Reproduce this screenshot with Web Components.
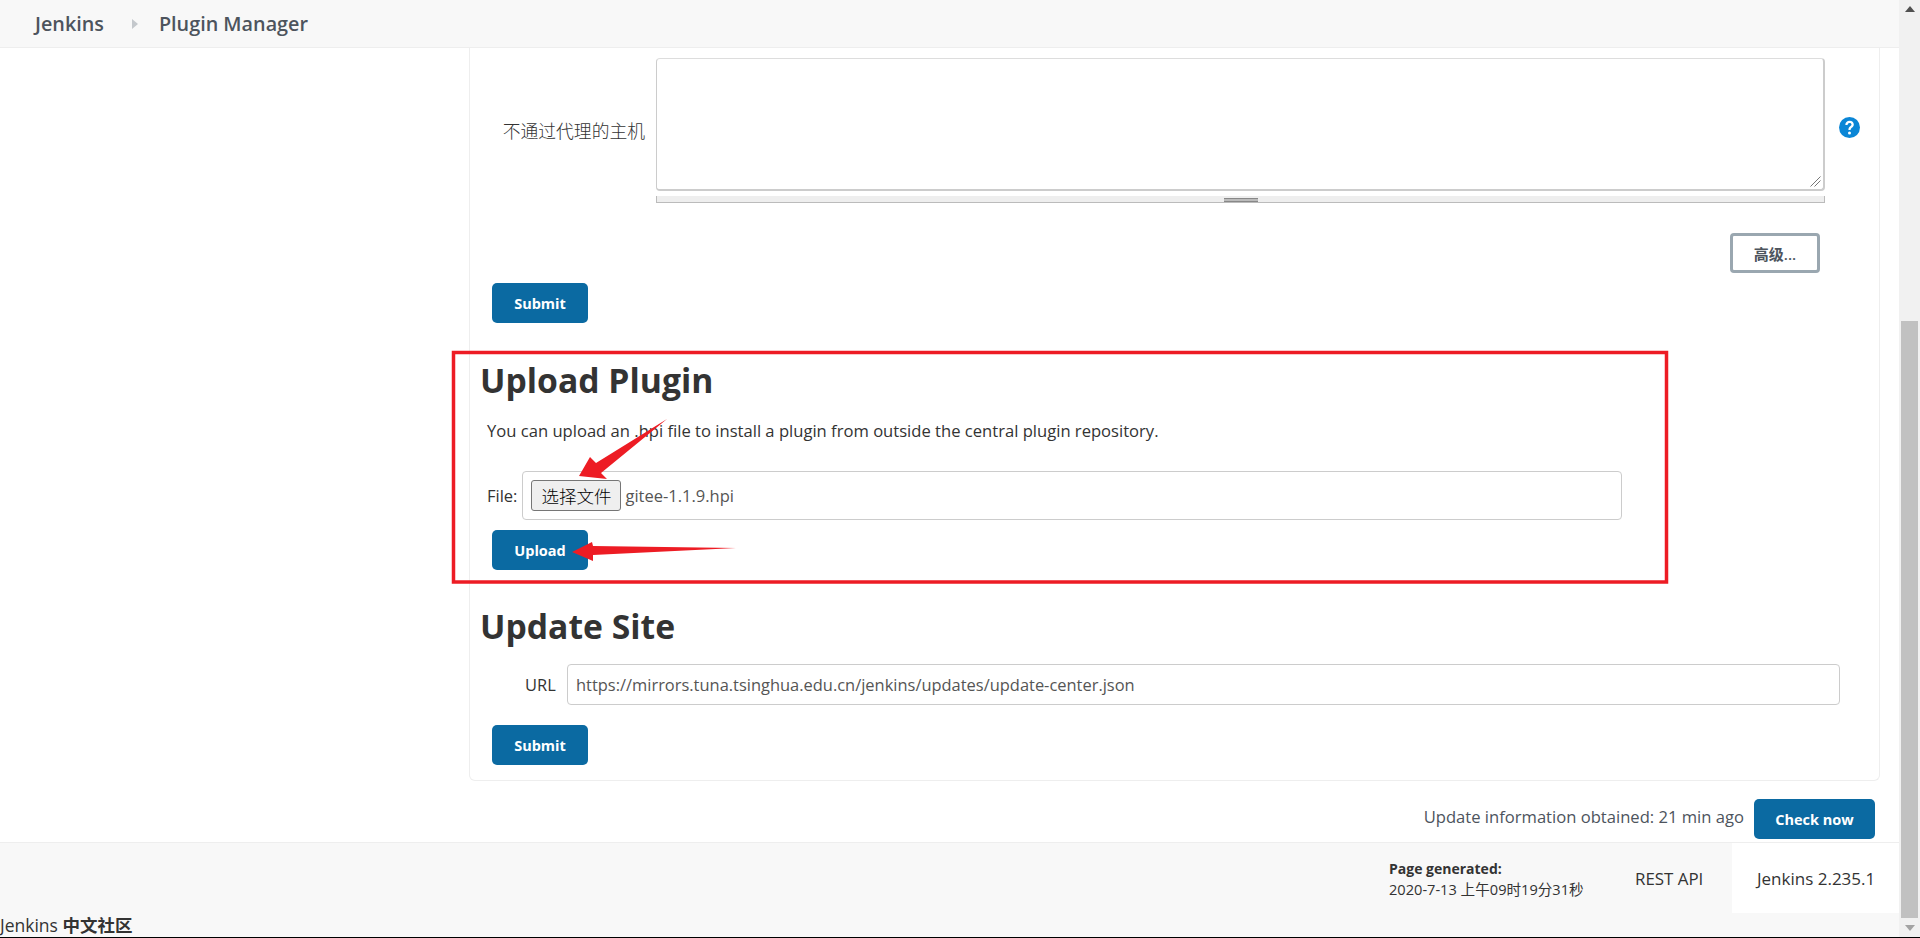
<!DOCTYPE html>
<html>
<head>
<meta charset="utf-8">
<title>Plugin Manager</title>
<style>
  html, body { margin: 0; height: 100%; overflow: hidden; background: #fff; }
  body {
    font-family: "Open Sans", "Noto Sans CJK SC", sans-serif;
    font-size: 16px;
    color: #333;
  }
</style>
</head>
<body>
<jk-shell>
  <jk-header>
    <a>Jenkins</a>
    <a>Plugin Manager</a>
  </jk-header>
  <jk-card>
    <jk-field label="不通过代理的主机" help></jk-field>
    <jk-advanced>高级...</jk-advanced>
    <jk-button class="first">Submit</jk-button>
    <jk-section heading="Upload Plugin" style="margin-top:36px">
      <p>You can upload an .hpi file to install a plugin from outside the central plugin repository.</p>
      <jk-file></jk-file>
      <jk-button>Upload</jk-button>
    </jk-section>
    <jk-section heading="Update Site" style="margin-top:35px">
      <jk-url value="https://mirrors.tuna.tsinghua.edu.cn/jenkins/updates/update-center.json"></jk-url>
      <jk-button>Submit</jk-button>
    </jk-section>
  </jk-card>
  <jk-status>
    <span>Update information obtained: 21 min ago</span>
    <jk-button wide>Check now</jk-button>
  </jk-status>
  <jk-footer></jk-footer>
  <jk-annotations></jk-annotations>
</jk-shell>

<script>
const FONT = `"Open Sans", "Noto Sans CJK SC", sans-serif`;

// JkShell.js;
customElements.define(
  "jk-shell",
  class JkShell extends HTMLElement {
    constructor() {
      super();
      this.attachShadow({ mode: "open" }).innerHTML = `
      <style>
        :host {
          display: flex;
          height: 938px;
          box-sizing: border-box;
          border-bottom: 1px solid #000;
          overflow: hidden;
        }
        .page {
          flex: 1;
          min-width: 0;
          position: relative;
          display: flex;
          flex-direction: column;
        }
      </style>
      <div class="page"><slot></slot></div>
      <jk-scrollbar></jk-scrollbar>
      `;
    }
  }
);

// JkScrollbar.js;
customElements.define(
  "jk-scrollbar",
  class JkScrollbar extends HTMLElement {
    constructor() {
      super();
      this.attachShadow({ mode: "open" }).innerHTML = `
      <style>
        :host {
          display: flex;
          flex-direction: column;
          align-items: center;
          width: 21px;
          background: #f1f1f1;
          box-sizing: border-box;
          padding: 0 2px;
        }
        .arrow { height: 17px; display: flex; align-items: center; justify-content: center; flex: none; }
        .arrow.down { height: 19px; }
        .track { flex: 1; width: 17px; padding-top: 304px; box-sizing: border-box; display: flex; }
        .thumb { flex: 1; background: #c1c1c1; }
      </style>
      <div class="arrow"><svg width="10" height="6" viewBox="0 0 10 6"><path d="M5 0l5 6H0z" fill="#505050"/></svg></div>
      <div class="track"><div class="thumb"></div></div>
      <div class="arrow down"><svg width="10" height="6" viewBox="0 0 10 6"><path d="M0 0h10L5 6z" fill="#a3a3a3"/></svg></div>
      `;
    }
  }
);

// JkHeader.js;
customElements.define(
  "jk-header",
  class JkHeader extends HTMLElement {
    constructor() {
      super();
      this.attachShadow({ mode: "open" }).innerHTML = `
      <style>
        :host {
          display: flex;
          align-items: center;
          flex: none;
          height: 48px;
          box-sizing: border-box;
          padding-left: 35px;
          background: #f8f8f8;
          border-bottom: 1px solid #eee;
          font: 600 19.800px ${FONT};
          color: #4d545d;
        }
        svg { margin: 0 21px 0 28px; }
      </style>
      <slot name="root"></slot>
      <svg width="6" height="10" viewBox="0 0 6 10"><path d="M0 0l6 5-6 5z" fill="#c4c8cc"/></svg>
      <slot name="page"></slot>
      `;
    }
    connectedCallback() {
      const links = this.querySelectorAll("a");
      links[0].slot = "root";
      links[1].slot = "page";
    }
  }
);

// JkCard.js;
customElements.define(
  "jk-card",
  class JkCard extends HTMLElement {
    constructor() {
      super();
      this.attachShadow({ mode: "open" }).innerHTML = `
      <style>
        :host {
          display: block;
          flex: none;
          height: 733px;
          box-sizing: border-box;
          margin: 0 19px 0 469px;
          padding: 10px 0 0 22px;
          border: 1px solid #eee;
          border-top: 0;
          border-radius: 0 0 6px 6px;
        }
      </style>
      <slot></slot>
      `;
    }
  }
);

// JkField.js;
customElements.define(
  "jk-field",
  class JkField extends HTMLElement {
    constructor() {
      super();
      this.attachShadow({ mode: "open" }).innerHTML = `
      <style>
        :host {
          display: flex;
          margin-left: -22px;
          color: #333;
        }
        label {
          width: 186px;
          box-sizing: border-box;
          padding: 10px 11px 0 0;
          height: 133px;
          display: flex;
          align-items: center;
          justify-content: flex-end;
          font-size: 17.800px;
          font-weight: 300;
          flex: none;
        }
        .box { width: 1169px; flex: none; }
        .area {
          height: 133px;
          box-sizing: border-box;
          border: 2px solid #ccc;
          border-width: 1px 2px 2px 1px;
          border-top-color: #ddd;
          border-left-color: #ccc;
          border-radius: 4px;
          position: relative;
        }
        .area svg { position: absolute; right: 2px; bottom: 2px; }
        .grip {
          height: 7px;
          margin-top: 5px;
          box-sizing: border-box;
          background: #eee;
          border: 1px solid #bbb;
          border-top: 0;
          display: flex;
          justify-content: center;
          padding-top: 2px;
        }
        .grip i {
          width: 34px;
          height: 4px;
          box-sizing: border-box;
          border-top: 1px solid #888;
          border-bottom: 1px solid #888;
          background: #bbb;
        }
        .help {
          margin: 59px 0 0 14px;
          width: 21px;
          height: 21px;
          flex: none;
        }
      </style>
      <label></label>
      <div class="box">
        <div class="area">
          <svg width="11" height="11" viewBox="0 0 11 11"><path d="M10.5 .5L.5 10.5M10.5 4.5l-6 6" stroke="#777" fill="none"/></svg>
        </div>
        <div class="grip"><i></i></div>
      </div>
      <svg class="help" viewBox="0 0 21 21">
        <circle cx="10.5" cy="10.5" r="10.5" fill="#0b86d6"/>
        <path d="M6.300 8c0-2.600 1.800-4.300 4.300-4.300s4.200 1.500 4.200 3.700c0 3-3.200 3.100-3.200 5.500h-2.200c0-3.500 3.100-3.700 3.100-5.300 0-.9-.7-1.600-1.900-1.600s-2 .8-2 2z" fill="#fff"/>
        <circle cx="10.500" cy="15.900" r="1.500" fill="#fff"/>
      </svg>
      `;
    }
    connectedCallback() {
      this.shadowRoot.querySelector("label").textContent = this.getAttribute("label");
    }
  }
);

// JkAdvanced.js;
customElements.define(
  "jk-advanced",
  class JkAdvanced extends HTMLElement {
    constructor() {
      super();
      this.attachShadow({ mode: "open" }).innerHTML = `
      <style>
        :host {
          display: flex;
          align-items: center;
          justify-content: center;
          width: 90px;
          height: 40px;
          box-sizing: border-box;
          margin: 30px 0 10px 1238px;
          border: 3px solid #9aa7b0;
          border-radius: 4px;
          font: 600 15px ${FONT};
          color: #4d545d;
        }
      </style>
      <slot></slot>
      `;
    }
  }
);

// JkButton.js;
customElements.define(
  "jk-button",
  class JkButton extends HTMLElement {
    constructor() {
      super();
      this.attachShadow({ mode: "open" }).innerHTML = `
      <style>
        :host {
          display: flex;
          align-items: center;
          justify-content: center;
          width: 96px;
          height: 40px;
          box-sizing: border-box;
          background: #0b6aa2;
          color: #fff;
          border-radius: 5px;
          font: 700 14.500px ${FONT};
          flex: none;
        }
        :host([wide]) { width: 121px; }
      </style>
      <slot></slot>
      `;
    }
  }
);

// JkSection.js;
customElements.define(
  "jk-section",
  class JkSection extends HTMLElement {
    constructor() {
      super();
      this.attachShadow({ mode: "open" }).innerHTML = `
      <style>
        :host { display: block; }
        h1 {
          margin: 0 0 0 -12px;
          font: 700 33.700px/42px ${FONT};
          color: #333;
        }
        ::slotted(p) {
          margin: 18px 0 28px -5px;
          font-size: 16.600px;
          line-height: 24px;
          color: #333;
        }
      </style>
      <h1></h1>
      <slot></slot>
      `;
    }
    connectedCallback() {
      this.shadowRoot.querySelector("h1").textContent = this.getAttribute("heading");
    }
  }
);

// JkFile.js;
customElements.define(
  "jk-file",
  class JkFile extends HTMLElement {
    constructor() {
      super();
      this.attachShadow({ mode: "open" }).innerHTML = `
      <style>
        :host {
          display: flex;
          align-items: center;
          margin: 0 0 10px -5px;
          font-size: 16.500px;
        }
        .box {
          margin-left: 5px;
          width: 1100px;
          height: 49px;
          box-sizing: border-box;
          border: 1px solid #ccc;
          border-radius: 4px;
          display: flex;
          align-items: center;
          padding-left: 8px;
          color: #555;
        }
        button {
          width: 90px;
          height: 31px;
          padding: 0;
          background: #efefef;
          border: 1px solid #767676;
          border-radius: 3px;
          color: #000;
          font: 300 17.500px "Noto Sans CJK SC", sans-serif;
          margin-right: 4px;
        }
      </style>
      <span>File:</span>
      <div class="box"><button type="button">选择文件</button><span>gitee-1.1.9.hpi</span></div>
      `;
    }
  }
);

// JkUrl.js;
customElements.define(
  "jk-url",
  class JkUrl extends HTMLElement {
    constructor() {
      super();
      this.attachShadow({ mode: "open" }).innerHTML = `
      <style>
        :host {
          display: flex;
          align-items: center;
          margin: 17px 0 20px 33px;
          font-size: 16.450px;
        }
        span { width: 32px; margin-right: 10px; }
        .box {
          width: 1273px;
          height: 41px;
          box-sizing: border-box;
          border: 1px solid #ccc;
          border-radius: 4px;
          display: flex;
          align-items: center;
          padding-left: 8px;
          color: #555;
        }
      </style>
      <span>URL</span>
      <div class="box"></div>
      `;
    }
    connectedCallback() {
      this.shadowRoot.querySelector(".box").textContent = this.getAttribute("value");
    }
  }
);

// JkStatus.js;
customElements.define(
  "jk-status",
  class JkStatus extends HTMLElement {
    constructor() {
      super();
      this.attachShadow({ mode: "open" }).innerHTML = `
      <style>
        :host {
          display: flex;
          align-items: flex-start;
          justify-content: flex-end;
          gap: 10px;
          flex: none;
          height: 61px;
          box-sizing: border-box;
          padding: 18px 24px 0 0;
          font-size: 16.600px;
          line-height: 36px;
          color: #4d545d;
        }
      </style>
      <slot></slot>
      `;
    }
  }
);

// JkFooter.js;
customElements.define(
  "jk-footer",
  class JkFooter extends HTMLElement {
    constructor() {
      super();
      this.attachShadow({ mode: "open" }).innerHTML = `
      <style>
        :host {
          display: block;
          flex: 1;
          box-sizing: border-box;
          background: #f8f8f8;
          border-top: 1px solid #eee;
          color: #333;
        }
        .top {
          display: flex;
          justify-content: flex-end;
          height: 70px;
        }
        .gen {
          width: 246px;
          box-sizing: border-box;
          padding-top: 15px;
          font-size: 14.600px;
          line-height: 21px;
        }
        .gen b { display: block; font-size: 14px; font-weight: 700; }
        .api {
          display: flex;
          align-items: center;
          width: 97px;
          font-size: 16.900px;
          font-weight: 500;
        }
        .ver {
          display: flex;
          align-items: center;
          width: 167px;
          box-sizing: border-box;
          padding-left: 25px;
          background: #fff;
          font-size: 17px;
        }
        .cn { font-size: 17.500px; line-height: 24px; }
        .cn b { font-family: "Noto Sans CJK SC", sans-serif; }
      </style>
      <div class="top">
        <div class="gen"><b>Page generated:</b>2020-7-13 上午09时19分31秒</div>
        <div class="api">REST API</div>
        <div class="ver">Jenkins 2.235.1</div>
      </div>
      <div class="cn">Jenkins <b>中文社区</b></div>
      `;
    }
  }
);

// JkAnnotations.js;
customElements.define(
  "jk-annotations",
  class JkAnnotations extends HTMLElement {
    constructor() {
      super();
      this.attachShadow({ mode: "open" }).innerHTML = `
      <style>
        :host { position: absolute; inset: 0; pointer-events: none; }
        svg { display: block; }
      </style>
      <svg width="1899" height="938" viewBox="0 0 1899 938">
        <rect x="453.500" y="352.500" width="1213" height="229.500" fill="none" stroke="#ed1c24" stroke-width="3.500"/>
        <path d="M667 419L601 473L607 479L579 476L590 457L596 463Z" fill="#ed1c24"/>
        <path d="M736 548L593 555L593 561L572 552L592 542L593 546Z" fill="#ed1c24"/>
      </svg>
      `;
    }
  }
);
</script>
</body>
</html>
